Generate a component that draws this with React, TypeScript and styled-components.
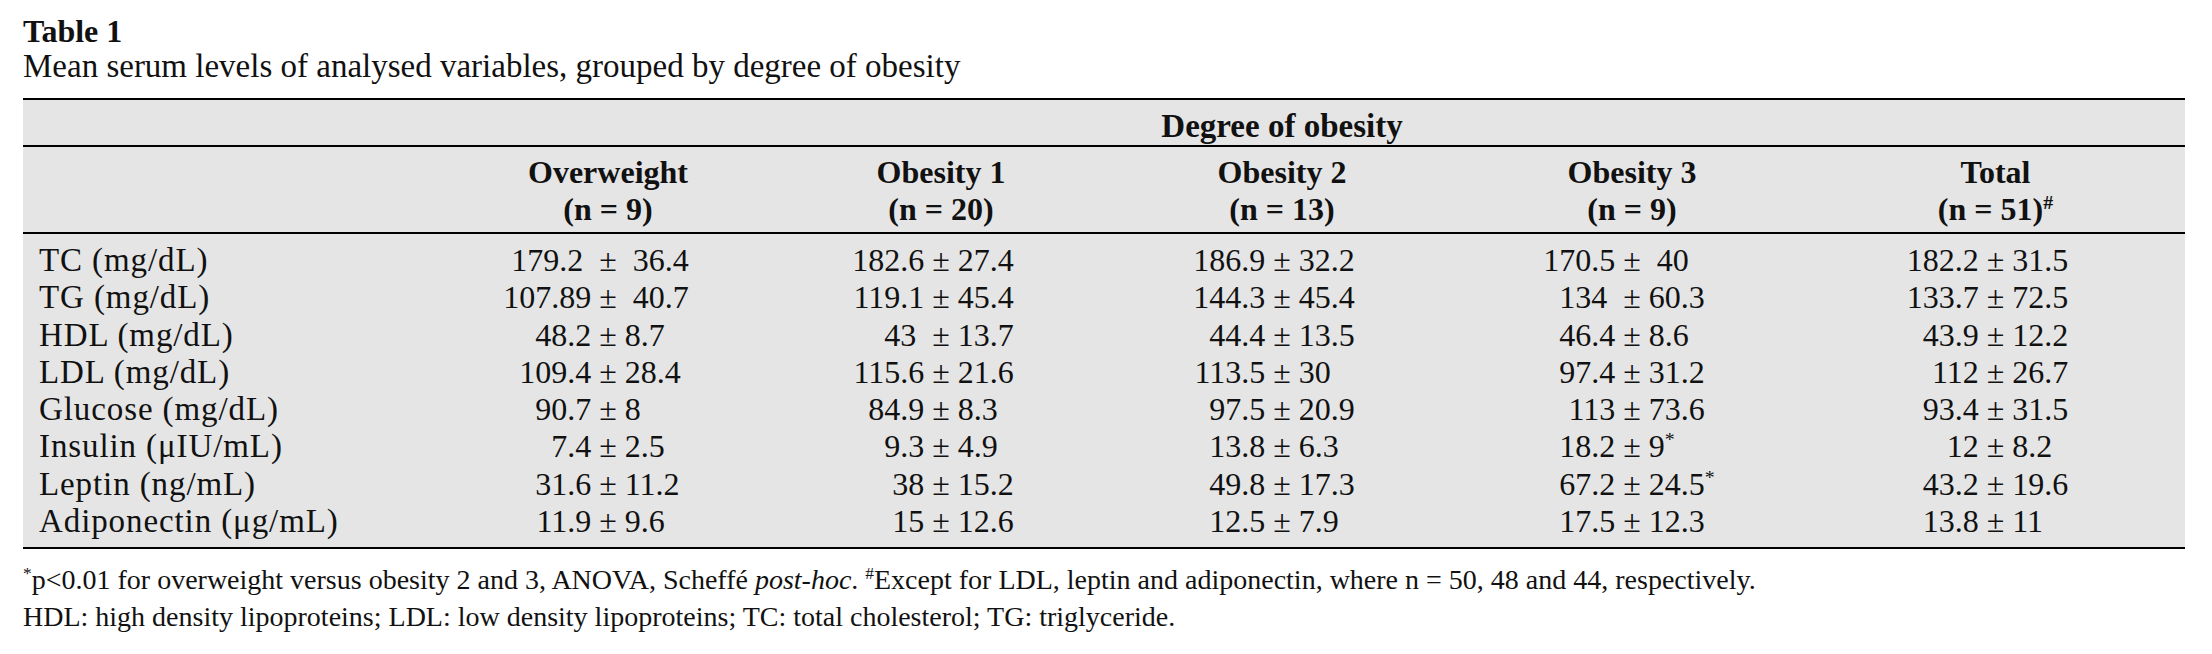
import React from 'react';
import styled, { createGlobalStyle } from 'styled-components';

const GlobalStyle = createGlobalStyle`
  html, body {
    margin: 0;
    padding: 0;
    background: #ffffff;
  }
  body {
    font-family: "Liberation Serif", "Times New Roman", serif;
    color: #111111;
  }
`;

const COLUMNS = '417px 336px 330px 352px 348px 379px';

const Page = styled.div`
  width: 2162px;
  padding: 14px 0 0 23px;
`;

const Title = styled.div`
  font-weight: 700;
  font-size: 32px;
  line-height: 35px;
`;

const Caption = styled.div`
  font-size: 33px;
  line-height: 34px;
  white-space: nowrap;
`;

const Table = styled.div`
  margin-top: 15px;
  background: #e5e5e5;
  border-top: 2px solid #000;
  border-bottom: 2px solid #000;
`;

const GroupRow = styled.div`
  display: grid;
  grid-template-columns: ${COLUMNS};
  height: 47px;
  box-sizing: border-box;
  padding-top: 6px;
  border-bottom: 2px solid #000;
  font-weight: 700;
  font-size: 33px;
  line-height: 41px;
`;

const GroupTitle = styled.div`
  grid-column: 4;
  text-align: center;
  white-space: nowrap;
`;

const HeadRow = styled.div`
  display: grid;
  grid-template-columns: ${COLUMNS};
  padding: 7px 0 4px;
  border-bottom: 2px solid #000;
  font-weight: 700;
  font-size: 32px;
  line-height: 37px;
`;

const HeadCell = styled.div`
  text-align: center;
  white-space: nowrap;
`;

const Body = styled.div`
  padding: 8px 0 7px;
  font-size: 32px;
  line-height: 37.3px;
`;

const DataRow = styled.div`
  display: grid;
  grid-template-columns: ${COLUMNS};
`;

const Label = styled.div`
  padding-left: 16px;
  font-size: 33px;
  letter-spacing: 0.9px;
  white-space: nowrap;
`;

const Cell = styled.div`
  display: grid;
  grid-template-columns: 1fr auto 1fr;
  white-space: pre;
`;

const Mean = styled.span`
  justify-self: end;
`;

const Sd = styled.span`
  justify-self: start;
`;

const Sup = styled.sup`
  font-size: 62%;
  line-height: 0;
  vertical-align: 0.55em;
`;

const Notes = styled.div`
  margin-top: 13px;
  font-size: 28px;
  line-height: 36.5px;
  white-space: nowrap;
`;

type Row = { label: string; values: string[] };

const rows: Row[] = [
  { label: 'TC (mg/dL)', values: ['179.2  ±  36.4', '182.6 ± 27.4', '186.9 ± 32.2', '170.5 ±  40', '182.2 ± 31.5'] },
  { label: 'TG (mg/dL)', values: ['107.89 ±  40.7', '119.1 ± 45.4', '144.3 ± 45.4', '134  ± 60.3', '133.7 ± 72.5'] },
  { label: 'HDL (mg/dL)', values: ['48.2 ± 8.7', '43  ± 13.7', '44.4 ± 13.5', '46.4 ± 8.6', '43.9 ± 12.2'] },
  { label: 'LDL (mg/dL)', values: ['109.4 ± 28.4', '115.6 ± 21.6', '113.5 ± 30', '97.4 ± 31.2', '112 ± 26.7'] },
  { label: 'Glucose (mg/dL)', values: ['90.7 ± 8', '84.9 ± 8.3', '97.5 ± 20.9', '113 ± 73.6', '93.4 ± 31.5'] },
  { label: 'Insulin (μIU/mL)', values: ['7.4 ± 2.5', '9.3 ± 4.9', '13.8 ± 6.3', '18.2 ± 9*', '12 ± 8.2'] },
  { label: 'Leptin (ng/mL)', values: ['31.6 ± 11.2', '38 ± 15.2', '49.8 ± 17.3', '67.2 ± 24.5*', '43.2 ± 19.6'] },
  { label: 'Adiponectin (μg/mL)', values: ['11.9 ± 9.6', '15 ± 12.6', '12.5 ± 7.9', '17.5 ± 12.3', '13.8 ± 11'] },
];

const ValueCell = ({ value }: { value: string }) => {
  const [mean, rest] = value.split('±');
  const marked = rest.endsWith('*');
  const sd = marked ? rest.slice(0, -1) : rest;
  return (
    <Cell>
      <Mean>{mean}</Mean>
      <span>±</span>
      <Sd>
        {sd}
        {marked && <Sup>*</Sup>}
      </Sd>
    </Cell>
  );
};

const App = () => {
  return (
    <Page>
      <GlobalStyle />
      <Title>Table 1</Title>
      <Caption>Mean serum levels of analysed variables, grouped by degree of obesity</Caption>

      <Table>
        <GroupRow>
          <GroupTitle>Degree of obesity</GroupTitle>
        </GroupRow>

        <HeadRow>
          <div />
          <HeadCell>
            Overweight
            <br />
            (n = 9)
          </HeadCell>
          <HeadCell>
            Obesity 1
            <br />
            (n = 20)
          </HeadCell>
          <HeadCell>
            Obesity 2
            <br />
            (n = 13)
          </HeadCell>
          <HeadCell>
            Obesity 3
            <br />
            (n = 9)
          </HeadCell>
          <HeadCell>
            Total
            <br />
            (n = 51)<Sup>#</Sup>
          </HeadCell>
        </HeadRow>

        <Body>
          {rows.map((row) => (
            <DataRow key={row.label}>
              <Label>{row.label}</Label>
              {row.values.map((v, i) => (
                <ValueCell key={i} value={v} />
              ))}
            </DataRow>
          ))}
        </Body>
      </Table>

      <Notes>
        <div>
          <Sup>*</Sup>p&lt;0.01 for overweight versus obesity 2 and 3, ANOVA, Scheffé <i>post-hoc</i>.{' '}
          <Sup>#</Sup>Except for LDL, leptin and adiponectin, where n = 50, 48 and 44, respectively.
        </div>
        <div>
          HDL: high density lipoproteins; LDL: low density lipoproteins; TC: total cholesterol; TG:
          triglyceride.
        </div>
      </Notes>
    </Page>
  );
};

export default App;
